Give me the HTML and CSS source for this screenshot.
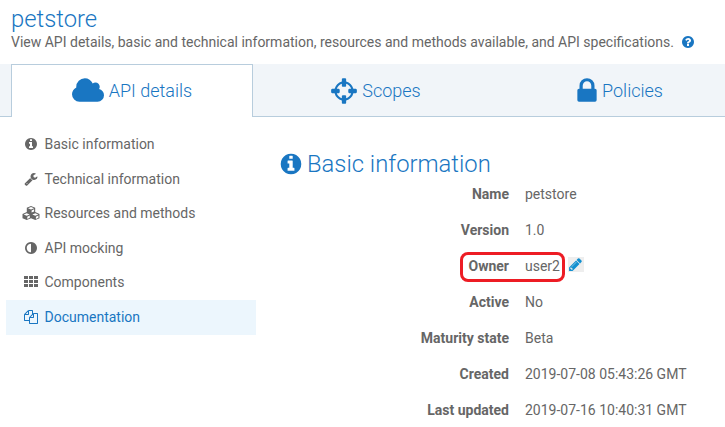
FILE: index.html
```html
<!DOCTYPE html>
<html lang="en">
<head>
<meta charset="utf-8">
<title>petstore</title>
<link rel="stylesheet" href="styles.css">
</head>
<body>
<svg class="sprite" aria-hidden="true">
  <symbol id="info" viewBox="0 0 1792 1792"><path d="M1152 1376v-160q0-14-9-23t-23-9h-96v-512q0-14-9-23t-23-9h-320q-14 0-23 9t-9 23v160q0 14 9 23t23 9h96v320h-96q-14 0-23 9t-9 23v160q0 14 9 23t23 9h448q14 0 23-9t9-23zm-128-896v-160q0-14-9-23t-23-9h-192q-14 0-23 9t-9 23v160q0 14 9 23t23 9h192q14 0 23-9t9-23zm640 416q0 209-103 385.5t-279.5 279.5-385.5 103-385.5-103-279.5-279.5-103-385.5 103-385.5 279.5-279.5 385.5-103 385.5 103 279.5 279.5 103 385.5z"/></symbol>
  <symbol id="question" viewBox="0 0 1792 1792"><path d="M1024 1376v-192q0-14-9-23t-23-9h-192q-14 0-23 9t-9 23v192q0 14 9 23t23 9h192q14 0 23-9t9-23zm256-672q0-88-55.5-163t-138.5-116-170-41q-243 0-371 213-15 24 8 42l132 100q7 6 19 6 16 0 25-12 53-68 86-92 34-24 86-24 48 0 85.5 26t37.5 59q0 38-20 61t-68 45q-63 28-115.5 86.5t-52.5 125.5v36q0 14 9 23t23 9h192q14 0 23-9t9-23q0-19 21.5-49.5t54.5-49.5q32-18 49-28.5t46-35 44.5-48 28-60.5 12.5-81zm384 192q0 209-103 385.5t-279.5 279.5-385.5 103-385.5-103-279.5-279.5-103-385.5 103-385.5 279.5-279.5 385.5-103 385.5 103 279.5 279.5 103 385.5z"/></symbol>
</svg>
<header class="page-head">
  <h1>petstore</h1>
  <p class="lead">View API details, basic and technical information, resources and methods available, and API specifications. <svg class="icon help"><use href="#question"/></svg></p>
</header>
<nav class="tabs">
  <a class="tab active"><svg class="cloud" viewBox="64 0 1920 1792"><path d="M1984 1152q0 159-112.5 271.5t-271.5 112.5h-1088q-185 0-316.5-131.5t-131.5-316.5q0-132 71-241.5t187-163.5q-2-28-2-43 0-212 150-362t362-150q158 0 286.5 88t187.5 230q70-62 166-62 106 0 181 75t75 181q0 75-41 138 129 30 213 134.5t84 239.5z"/></svg><span>API details</span></a>
  <a class="tab"><svg class="cross" viewBox="128 0 1536 1792"><path d="M1325 1024h-109q-26 0-45-19t-19-45v-128q0-26 19-45t45-19h109q-32-108-112.5-188.5t-188.5-112.5v109q0 26-19 45t-45 19h-128q-26 0-45-19t-19-45v-109q-108 32-188.5 112.5t-112.5 188.5h109q26 0 45 19t19 45v128q0 26-19 45t-45 19h-109q32 108 112.5 188.5t188.5 112.5v-109q0-26 19-45t45-19h128q26 0 45 19t19 45v109q108-32 188.5-112.5t112.5-188.5zm339-192v128q0 26-19 45t-45 19h-143q-37 161-154.5 278.5t-278.5 154.5v143q0 26-19 45t-45 19h-128q-26 0-45-19t-19-45v-143q-161-37-278.5-154.5t-154.5-278.5h-143q-26 0-45-19t-19-45v-128q0-26 19-45t45-19h143q37-161 154.5-278.5t278.5-154.5v-143q0-26 19-45t45-19h128q26 0 45 19t19 45v143q161 37 278.5 154.5t154.5 278.5h143q26 0 45 19t19 45z"/></svg><span>Scopes</span></a>
  <a class="tab"><svg class="lock" viewBox="320 0 1152 1792"><path d="M640 768h512v-192q0-106-75-181t-181-75-181 75-75 181v192zm832 96v576q0 40-28 68t-68 28h-960q-40 0-68-28t-28-68v-576q0-40 28-68t68-28h32v-192q0-184 132-316t316-132 316 132 132 316v192h32q40 0 68 28t28 68z"/></svg><span>Policies</span></a>
</nav>
<main class="content">
  <ul class="menu">
    <li><svg class="icon"><use href="#info"/></svg><span>Basic information</span></li>
    <li><svg class="icon" viewBox="0 0 1792 1792"><path d="M448 1472q0-26-19-45t-45-19-45 19-19 45 19 45 45 19 45-19 19-45zm644-420l-682 682q-37 37-90 37-52 0-91-37l-106-108q-38-36-38-90 0-53 38-91l681-681q39 98 114.5 173.5t173.5 114.5zm634-435q0 39-23 106-47 134-164.5 217.5t-258.5 83.5q-185 0-316.5-131.5t-131.5-316.5 131.5-316.5 316.5-131.5q58 0 121.5 16.5t107.5 46.5q16 11 16 28t-16 28l-293 169v224l193 107q5-3 79-48.5t135.5-81 70.5-35.5q15 0 23.5 10t8.5 25z"/></svg><span>Technical information</span></li>
    <li><svg class="icon cubes" viewBox="0 0 18 14"><path fill-rule="evenodd" d="M9 0l4.200 1.700v4.300l4.300 1.900v4.300L13.300 14 9 12.200 4.700 14 .5 12.200V7.900L4.800 6V1.700zM9 1L6 2.200l3 1.200 3-1.200zM9.600 4.400v2.200l2.500-1.100V3.300zM4.700 7.200l-3 1.200 3 1.300 3-1.300zM5.300 10.700v2.200l2.500-1.100V9.600zM13.300 7.200l-3 1.200 3 1.300 3-1.300zM13.900 10.700v2.200l2.500-1.100V9.600z"/></svg><span>Resources and methods</span></li>
    <li><svg class="icon" viewBox="0 0 1792 1792"><path d="M896 1440v-1088q-148 0-273 73t-198 198-73 273 73 273 198 198 273 73zm768-544q0 209-103 385.500t-279.500 279.500-385.500 103-385.500-103-279.500-279.500-103-385.500 103-385.500 279.500-279.500 385.500-103 385.500 103 279.500 279.500 103 385.500z"/></svg><span>API mocking</span></li>
    <li><svg class="icon" viewBox="0 0 14 14"><path d="M0 1h4v3H0zM5 1h4v3H5zM10 1h4v3h-4zM0 5h4v3H0zM5 5h4v3H5zM10 5h4v3h-4zM0 9h4v3H0zM5 9h4v3H5zM10 9h4v3h-4z"/></svg><span>Components</span></li>
    <li class="selected"><svg class="icon" viewBox="0 0 1792 1792"><path d="M1696 384q40 0 68 28t28 68v1216q0 40-28 68t-68 28h-960q-40 0-68-28t-28-68v-288h-544q-40 0-68-28t-28-68v-672q0-40 20-88t48-76l408-408q28-28 76-48t88-20h416q40 0 68 28t28 68v328q68-40 128-40h416zm-544 213l-299 299h299v-299zm-640-384l-299 299h299v-299zm196 647l316-316v-416h-384v416q0 40-28 68t-68 28h-416v640h512v-256q0-40 20-88t48-76zm956 804v-1152h-384v416q0 40-28 68t-68 28h-416v640h896z"/></svg><span>Documentation</span></li>
  </ul>
  <section class="details">
    <h2><svg class="info-big"><use href="#info"/></svg><span>Basic information</span></h2>
    <dl>
      <dt>Name</dt><dd>petstore</dd>
      <dt>Version</dt><dd>1.0</dd>
      <dt>Owner</dt><dd class="owner">user2<button class="edit" aria-label="Edit"><svg viewBox="0 0 1792 1792"><path d="M491 1536l91-91-235-235-91 91v107h128v128h107zm523-928q0-22-22-22-10 0-17 7l-542 542q-7 7-7 17 0 22 22 22 10 0 17-7l542-542q7-7 7-17zm-54-192l416 416-832 832h-416v-416zm683 96q0 53-37 90l-166 166-416-416 166-165q36-38 90-38 53 0 91 38l235 234q37 39 37 91z"/></svg></button><span class="ring"></span></dd>
      <dt>Active</dt><dd>No</dd>
      <dt>Maturity state</dt><dd>Beta</dd>
      <dt>Created</dt><dd>2019-07-08 05:43:26 GMT</dd>
      <dt>Last updated</dt><dd>2019-07-16 10:40:31 GMT</dd>
    </dl>
  </section>
</main>
</body>
</html>
```
FILE: styles.css
```css
* { box-sizing: border-box; }
body {
  margin: 0;
  height: 427px;
  overflow: hidden;
  background: #fff;
  color: #666;
  font: 14px/20px Roboto, sans-serif;
  white-space: nowrap;
}
svg { fill: currentColor; flex: none; }
.sprite { display: none; }
.icon { width: 14px; height: 14px; }
h1, h2, p, ul, dl, dd { margin: 0; padding: 0; }
h1, h2 { color: #1976c2; font-size: 23.800px; font-weight: 300; }
.page-head { height: 64px; padding: 5px 11px 0; }
h1 { line-height: 28px; }
.lead { display: flex; align-items: center; line-height: 18px; }
.help { color: #1976c2; margin-left: 7px; }

.tabs {
  display: flex;
  gap: 2px;
  height: 53px;
  padding-left: 11px;
  background: linear-gradient(#b8cddd, #b8cddd) bottom / 100% 1px no-repeat #f1f5f9;
}
.tab {
  flex: none;
  display: flex;
  align-items: center;
  justify-content: center;
  gap: 5px;
  width: 242px;
  color: #1976c2;
  font-size: 18px;
  font-weight: 300;
}
.tab.active {
  background: #fff;
  border: 1px solid #b8cddd;
  border-bottom: 0;
}
.cloud { width: 32px; height: 30px; }
.cross { width: 26px; height: 30px; }
.lock { width: 20px; height: 30px; }

.content { display: flex; }
.menu { width: 256px; padding: 10px 0 0 6px; list-style: none; }
.menu li {
  display: flex;
  align-items: center;
  height: 34.500px;
  padding-left: 18px;
  gap: 6.500px;
}
.menu .cubes { width: 18px; margin: 0 -2px; }
.menu .selected { height: 35px; background: #ecf6fd; color: #1976c2; }

.details { padding: 32px 0 0 24px; }
h2 { display: flex; align-items: center; gap: 4px; height: 30px; margin-left: -1px; }
.info-big { width: 24px; height: 24px; }
dl {
  display: grid;
  grid-template-columns: 229px 180px;
  column-gap: 16px;
  grid-auto-rows: 36px;
  align-items: center;
  margin-top: -3px;
}
dt { font-weight: 700; text-align: right; }
.owner { position: relative; display: flex; align-items: center; }
.edit {
  width: 16px;
  height: 15px;
  margin: -3px 0 0 8px;
  padding: 0;
  border: 0;
  background: #eee;
  color: #1290d0;
  line-height: 0;
}
.edit svg { width: 15px; height: 15px; }
.ring {
  position: absolute;
  left: -65px;
  top: -4px;
  width: 105px;
  height: 30px;
  border: 3px solid #ed1c24;
  border-radius: 8px;
}
```
